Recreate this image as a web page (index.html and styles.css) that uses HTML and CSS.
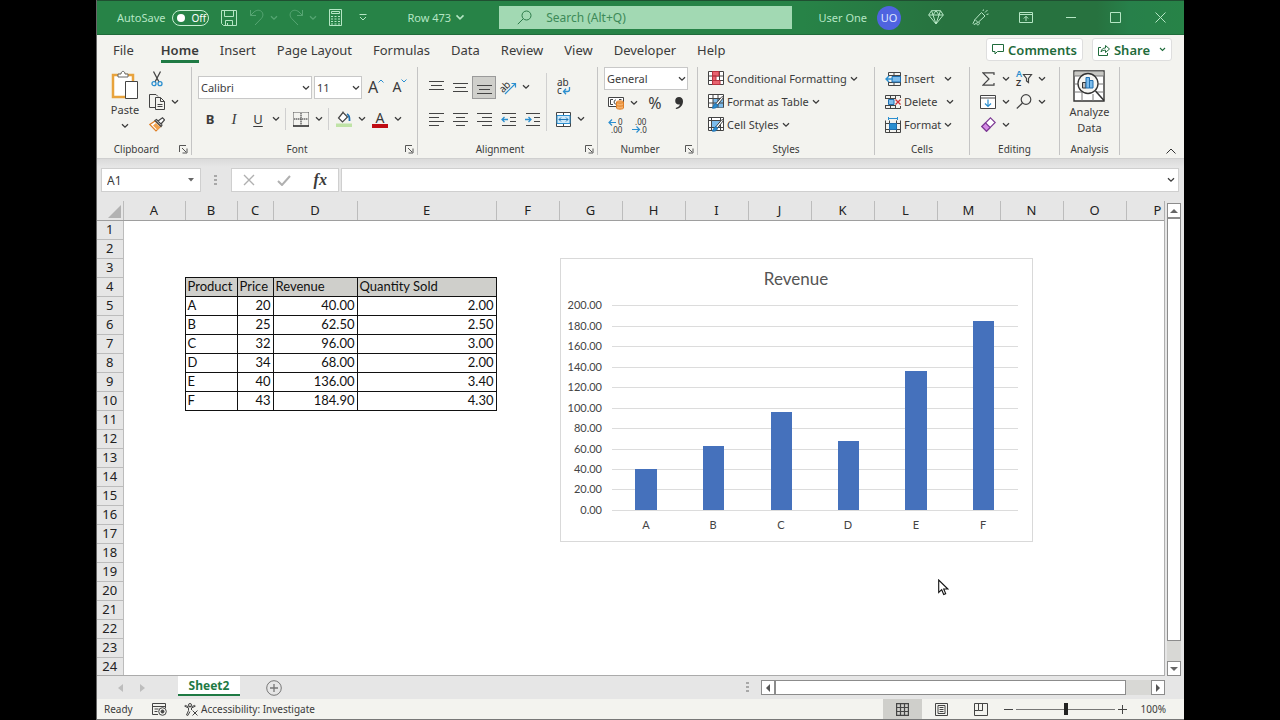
FILE: index.html
```html
<!DOCTYPE html>
<html lang="en">
<head>
    <meta charset="UTF-8">
    <meta name="viewport" content="width=device-width, initial-scale=1.0">
    <title>Row 473</title>
    <link rel="stylesheet" href="styles.css">
</head>
<body>

<!-- shared shapes -->
<svg class="defs" width="0" height="0" aria-hidden="true">
    <symbol id="chev" viewBox="0 0 8 6"><path d="M1 1.2 4 4.2 7 1.2" fill="none" stroke="currentColor" stroke-width="1.3"/></symbol>
    <symbol id="launch" viewBox="0 0 9 9"><path d="M.5 7V.5H7M3 3l4 4M8 3.500V8H3.500" fill="none" stroke="currentColor"/></symbol>
</svg>

<div class="app">

    <header class="titlebar">
        <label class="autosave">AutoSave
            <span class="switch"><input type="checkbox" role="switch" aria-label="AutoSave"><span>Off</span></span>
        </label>
        <div class="quick">
            <button class="q-btn" aria-label="Save">
                <svg width="16" height="16" viewBox="0 0 16 16" fill="none" stroke="currentColor"><path d="M.5.5h15v15h-13l-2-2zM3.500.5v6h9v-6M4.500 15.500v-5h7v5M6.500 13v2.500"/></svg>
            </button>
            <button class="q-btn faded" aria-label="Undo">
                <svg width="16" height="17" viewBox="0 0 16 17" fill="none" stroke="currentColor"><path d="M1.500 1v5.500H7M1.500 6.500 5 3c3-2.500 6-2 7.500-.5 2 2 1.800 5-.2 7L6 16"/></svg>
            </button>
            <button class="q-chev faded" aria-label="Undo list"><svg width="8" height="6"><use href="#chev"/></svg></button>
            <button class="q-btn faded" aria-label="Redo">
                <svg width="16" height="17" viewBox="0 0 16 17" fill="none" stroke="currentColor"><path d="M14.500 1v5.500H9M14.500 6.500 11 3C8 .5 5 1 3.500 2.500c-2 2-1.800 5 .2 7L10 16"/></svg>
            </button>
            <button class="q-chev faded" aria-label="Redo list"><svg width="8" height="6"><use href="#chev"/></svg></button>
            <button class="q-btn" aria-label="Calculator">
                <svg width="13" height="17" viewBox="0 0 13 17" fill="none" stroke="currentColor"><path d="M.5.5h12v16H.5zM2.500 2.500h8v2h-8z"/><path d="M2 7.500h9M2 10h9M2 12.500h9M2 15h9" stroke-dasharray="2 1.500"/></svg>
            </button>
            <button class="q-btn" aria-label="Customize">
                <svg width="8" height="7" viewBox="0 0 8 7" fill="none" stroke="currentColor"><path d="M.5.5h7M1 3l3 3 3-3"/></svg>
            </button>
        </div>
        <button class="doc-name">Row 473 <svg width="10" height="7"><use href="#chev"/></svg></button>
        <label class="search">
            <svg width="15" height="15" viewBox="0 0 15 15" fill="none" stroke="currentColor"><circle cx="9.500" cy="5.500" r="4.500"/><path d="M6.200 8.800.8 14.200"/></svg>
            <input type="text" placeholder="Search (Alt+Q)" aria-label="Search">
        </label>
        <div class="account">
            <span>User One</span>
            <span class="avatar">UO</span>
        </div>
        <div class="window-btns">
            <button aria-label="Premium">
                <svg width="16" height="15" viewBox="0 0 16 15" fill="none" stroke="currentColor"><path d="M3.500.7h9L15.300 5 8 14 .7 5zM.7 5h14.600M5 5l3 9 3-9M3.500.7 5 5l3-4.300L11 5l1.500-4.300"/></svg>
            </button>
            <button aria-label="Draw">
                <svg width="17" height="17" viewBox="0 0 17 17" fill="none" stroke="currentColor"><path d="M9.500 3.500 13 7 6 13.500 2 15.500l-1-1 2-4zM3 10.500 6 13.500M4.500 15c1 1.500 3 1 3-1.500M11 2l.5-1.500M13 3.500 15.500 1M14.500 5.500l2-.5"/></svg>
            </button>
            <button aria-label="Ribbon display options">
                <svg width="14" height="11" viewBox="0 0 14 11" fill="none" stroke="currentColor"><path d="M.5.5h13v10H.5zM.5 2.500h13M7 9V4.500M4.800 6.500 7 4.300l2.200 2.200"/></svg>
            </button>
            <button aria-label="Minimize"><svg width="10" height="10" viewBox="0 0 10 10" stroke="currentColor"><path d="M0 4.500h10"/></svg></button>
            <button aria-label="Maximize"><svg width="11" height="11" viewBox="0 0 11 11" fill="none" stroke="currentColor"><path d="M.5.5h10v10H.5z"/></svg></button>
            <button aria-label="Close"><svg width="11" height="11" viewBox="0 0 11 11" stroke="currentColor"><path d="M.5.5l10 10M10.500.5l-10 10"/></svg></button>
        </div>
    </header>

    <nav class="tabs">
        <a class="tab file" href="#">File</a>
        <a class="tab active" href="#">Home</a>
        <a class="tab" href="#">Insert</a>
        <a class="tab" href="#">Page Layout</a>
        <a class="tab" href="#">Formulas</a>
        <a class="tab" href="#">Data</a>
        <a class="tab" href="#">Review</a>
        <a class="tab" href="#">View</a>
        <a class="tab" href="#">Developer</a>
        <a class="tab" href="#">Help</a>
        <div class="tab-actions">
            <button class="pill">
                <svg width="12" height="11" viewBox="0 0 12 11" fill="none" stroke="currentColor"><path d="M.5.5h11v7h-6l-2.500 2.500V7.500H.5z"/></svg>
                Comments
            </button>
            <button class="pill">
                <svg width="12" height="12" viewBox="0 0 12 12" fill="none" stroke="currentColor"><path d="M3 3.500H.5v8h9V9M3 8c.5-3 2-4 4.500-4V1.500l4 3.500-4 3.500V6.200C5.500 6.200 4 6.500 3 8z"/></svg>
                Share
                <svg class="pill-chev" width="7" height="5"><use href="#chev"/></svg>
            </button>
        </div>
    </nav>

    <section class="ribbon">
        <div class="group clipboard">
            <div class="group-body">
                <button class="big-btn">
                    <svg width="28" height="30" viewBox="0 0 28 30" fill="none"><path d="M2 5h20v22H2z" fill="#fff" stroke="#e8a33d" stroke-width="2.500"/><path d="M7 7V4h3c0-3.500 4-3.500 4 0h3v3z" fill="#fff" stroke="#666"/><path d="M14.500 11.500h12v17h-12z" fill="#fff" stroke="#444"/></svg>
                    <span>Paste</span>
                    <svg width="8" height="6"><use href="#chev"/></svg>
                </button>
                <div class="stack">
                    <button class="tool" aria-label="Cut">
                        <svg width="12" height="16" viewBox="0 0 12 16" fill="none" stroke="#444"><path d="M2.500.5 8 11M9.500.5 4 11" stroke-width="1.300"/><circle cx="3" cy="12.700" r="2" stroke="#2b8fd0" stroke-width="1.300"/><circle cx="9" cy="12.700" r="2" stroke="#2b8fd0" stroke-width="1.300"/></svg>
                    </button>
                    <div class="row">
                        <button class="tool" aria-label="Copy">
                            <svg width="16" height="16" viewBox="0 0 16 16" fill="none" stroke="#444"><path d="M6 13.500H.5V.5H7l2 2"/><path d="M6.500 3.500h5l4 4v8h-9zM11.500 3.500v4h4M8.500 10.500h5M8.500 12.500h5" fill="#f3f3ef"/></svg>
                        </button>
                        <button class="drop" aria-label="Copy options"><svg width="8" height="6"><use href="#chev"/></svg></button>
                    </div>
                    <button class="tool" aria-label="Format Painter">
                        <svg width="16" height="15" viewBox="0 0 16 15" fill="none"><path d="M6 4 .8 7.500 7 14l5-5z" fill="#fff" stroke="#e07f26" stroke-width="1.200"/><path d="M4 8.500l4.500 4.500 2.500-3-4-4z" fill="#f2a24e"/><path d="M6 3.500l1.500-1 5.500 5.500-1 1.500zM9 4l4.500-3.200 2 2L12 7" fill="#fff" stroke="#444" stroke-width="1.200"/></svg>
                    </button>
                </div>
            </div>
            <div class="group-foot"><span>Clipboard</span><button class="launcher" aria-label="Clipboard options"><svg width="9" height="9"><use href="#launch"/></svg></button></div>
        </div>

        <div class="group font">
            <div class="group-body two-rows">
                <div class="row">
                    <span class="combo font-name"><select aria-label="Font"><option>Calibri</option></select><svg width="8" height="6"><use href="#chev"/></svg></span>
                    <span class="combo font-size"><select aria-label="Font size"><option>11</option></select><svg width="8" height="6"><use href="#chev"/></svg></span>
                    <button class="tool grow" aria-label="Increase font size">A<svg width="6" height="4" viewBox="0 0 6 4"><path d="M.5 3.500 3 1l2.500 2.500" fill="none" stroke="#2b8fd0"/></svg></button>
                    <button class="tool shrink" aria-label="Decrease font size">A<svg width="6" height="4" viewBox="0 0 6 4"><path d="M.5.5 3 3 5.500.5" fill="none" stroke="#2b8fd0"/></svg></button>
                </div>
                <div class="row">
                    <button class="tool bold">B</button>
                    <button class="tool italic">I</button>
                    <button class="tool underline">U</button>
                    <button class="drop" aria-label="Underline options"><svg width="8" height="6"><use href="#chev"/></svg></button>
                    <span class="sep"></span>
                    <button class="tool" aria-label="Borders">
                        <svg width="16" height="15" viewBox="0 0 16 15" fill="none" stroke="#555"><path d="M.5.5h15M.5.5v13M15.500.5v13M8 1v12M1 7h14" stroke-dasharray="1 1"/><path d="M8 1v12M1 7h14" stroke-opacity=".6"/><path d="M0 14h16" stroke="#222" stroke-width="1.500"/></svg>
                    </button>
                    <button class="drop" aria-label="Border options"><svg width="8" height="6"><use href="#chev"/></svg></button>
                    <span class="sep"></span>
                    <button class="tool" aria-label="Fill color">
                        <svg width="16" height="16" viewBox="0 0 16 16" fill="none"><path d="M7 1.500 2.500 7l4 4L11.500 6 7 1.500V.5" fill="#fff" stroke="#444" stroke-width="1.200"/><path d="M11 3c2 1 2.800 3 2.500 7" stroke="#1f6fb0" stroke-width="1.800"/><path d="M0 12.500h16V16H0z" fill="#bfe3a6"/></svg>
                    </button>
                    <button class="drop" aria-label="Fill colors"><svg width="8" height="6"><use href="#chev"/></svg></button>
                    <button class="tool font-color" aria-label="Font color">A</button>
                    <button class="drop" aria-label="Font colors"><svg width="8" height="6"><use href="#chev"/></svg></button>
                </div>
            </div>
            <div class="group-foot"><span>Font</span><button class="launcher" aria-label="Font options"><svg width="9" height="9"><use href="#launch"/></svg></button></div>
        </div>

        <div class="group alignment">
            <div class="group-body">
                <div class="two-rows">
                    <div class="row">
                        <button class="tool" aria-label="Top align"><svg width="15" height="15" viewBox="0 0 15 15" stroke="#444"><path d="M0 1.500h15M2 5.500h11M0 9.500h15"/></svg></button>
                        <button class="tool" aria-label="Middle align"><svg width="15" height="15" viewBox="0 0 15 15" stroke="#444"><path d="M0 3.500h15M2 7.500h11M0 11.500h15"/></svg></button>
                        <button class="tool pressed" aria-label="Bottom align"><svg width="15" height="15" viewBox="0 0 15 15" stroke="#444"><path d="M0 5.500h15M2 9.500h11M0 13.500h15"/></svg></button>
                        <button class="tool" aria-label="Orientation">
                            <svg class="spill" width="17" height="16" viewBox="0 0 17 16"><text x="-1" y="11" transform="rotate(-45 5 8)" class="ico-text">ab</text><path d="M5 15 15.500 4.500M11.500 4.500h4v4" fill="none" stroke="#2b8fd0" stroke-width="1.200"/></svg>
                        </button>
                        <button class="drop" aria-label="Orientation options"><svg width="8" height="6"><use href="#chev"/></svg></button>
                    </div>
                    <div class="row">
                        <button class="tool" aria-label="Align left"><svg width="15" height="15" viewBox="0 0 15 15" stroke="#444"><path d="M0 1.500h15M0 5.500h10M0 9.500h15M0 13.500h10"/></svg></button>
                        <button class="tool" aria-label="Center"><svg width="15" height="15" viewBox="0 0 15 15" stroke="#444"><path d="M0 1.500h15M3 5.500h9M0 9.500h15M3 13.500h9"/></svg></button>
                        <button class="tool" aria-label="Align right"><svg width="15" height="15" viewBox="0 0 15 15" stroke="#444"><path d="M0 1.500h15M5 5.500h10M0 9.500h15M5 13.500h10"/></svg></button>
                        <button class="tool" aria-label="Decrease indent"><svg width="15" height="15" viewBox="0 0 15 15" fill="none" stroke="#444"><path d="M1 1.500h14M9 5.500h6M9 9.500h6M1 13.500h14"/><path d="M7 7.500H1M3.500 5 1 7.500 3.500 10" stroke="#2b8fd0" stroke-width="1.300"/></svg></button>
                        <button class="tool" aria-label="Increase indent"><svg width="15" height="15" viewBox="0 0 15 15" fill="none" stroke="#444"><path d="M1 1.500h14M9 5.500h6M9 9.500h6M1 13.500h14"/><path d="M0 7.500h6M3.500 5 6 7.500 3.500 10" stroke="#2b8fd0" stroke-width="1.300"/></svg></button>
                    </div>
                </div>
                <span class="sep tall"></span>
                <div class="two-rows">
                    <div class="row">
                        <button class="tool" aria-label="Wrap text">
                            <svg class="spill" width="15" height="17" viewBox="0 0 15 17"><text x="1" y="7" class="ico-text">ab</text><text x="1" y="15" class="ico-text">c</text><path d="M13.500 8v2.500q0 2-2 2H7.500M10 9.800l-2.500 2.700L10 15.200" fill="none" stroke="#2b8fd0" stroke-width="1.300"/></svg>
                        </button>
                    </div>
                    <div class="row">
                        <button class="tool" aria-label="Merge and center">
                            <svg width="15" height="15" viewBox="0 0 15 15" fill="none" stroke="#444"><path d="M.5.5h14v14H.5z" fill="#fff"/><path d="M1 3.500h13v8H1z" fill="#cfe8f8" stroke="#2b8fd0"/><path d="M7.500 1v2M7.500 12v2"/><path d="M3 7.500h9M5 5.500l-2 2 2 2M10 5.500l2 2-2 2" stroke="#1f78b8"/></svg>
                        </button>
                        <button class="drop" aria-label="Merge options"><svg width="8" height="6"><use href="#chev"/></svg></button>
                    </div>
                </div>
            </div>
            <div class="group-foot"><span>Alignment</span><button class="launcher" aria-label="Alignment options"><svg width="9" height="9"><use href="#launch"/></svg></button></div>
        </div>

        <div class="group number">
            <div class="group-body stack">
                <span class="combo"><select aria-label="Number format"><option>General</option></select><svg width="8" height="6"><use href="#chev"/></svg></span>
                <div class="row">
                    <button class="tool" aria-label="Accounting format">
                        <svg width="17" height="14" viewBox="0 0 17 14" fill="none" stroke="#444"><path d="M.5 1.500h15v9H.5z" fill="#fff"/><path d="M5 3.500H2.500v5H5M8 4c-2.500-.5-2.500 4.500 0 4M11 3.500h2.500"/><path d="M8.500 6c0-1.500 7-1.500 7 0v6c0 1.500-7 1.500-7 0z" fill="#f6b26b" stroke="#e07f26"/><path d="M8.500 6c0 1.500 7 1.500 7 0M8.500 9c0 1.500 7 1.500 7 0" stroke="#e07f26"/></svg>
                    </button>
                    <button class="drop" aria-label="Currencies"><svg width="8" height="6"><use href="#chev"/></svg></button>
                    <button class="tool percent">%</button>
                    <button class="tool" aria-label="Comma style">
                        <svg width="8" height="12" viewBox="0 0 8 12"><path d="M4 0c2.500 0 4 1.800 4 4.300C8 8.500 5 11.500 1 12l-.3-1C3.300 10.200 4.700 9 4.800 7.300 2.500 8.200.2 6.500.2 4 .2 1.600 1.800 0 4 0z" fill="#333"/></svg>
                    </button>
                </div>
                <div class="row">
                    <button class="tool" aria-label="Increase decimal">
                        <svg class="spill" width="16" height="16" viewBox="0 0 16 16"><text x="10" y="7" class="ico-num">0</text><text x="3" y="15" class="ico-num">.00</text><path d="M8 4.500H1M4 1.500l-3 3 3 3" fill="none" stroke="#2b8fd0" stroke-width="1.200"/></svg>
                    </button>
                    <button class="tool" aria-label="Decrease decimal">
                        <svg class="spill" width="16" height="16" viewBox="0 0 16 16"><text x="3" y="7" class="ico-num">.00</text><text x="8" y="15" class="ico-num">.0</text><path d="M0 11.500h7M4.500 8.500l3 3-3 3" fill="none" stroke="#2b8fd0" stroke-width="1.200"/></svg>
                    </button>
                </div>
            </div>
            <div class="group-foot"><span>Number</span><button class="launcher" aria-label="Number options"><svg width="9" height="9"><use href="#launch"/></svg></button></div>
        </div>

        <div class="group styles">
            <div class="group-body stack">
                <button class="text-btn">
                    <svg width="16" height="15" viewBox="0 0 16 15" fill="none" stroke="#444"><path d="M.5.5h15v13H.5z" fill="#fff"/><path d="M.5 5h15M.5 9.500h15M4.500.5v13M11.500.5v13"/><path d="M4.500.5H11V5H4.500zM4.500 5H8v4.500H4.500zM4.500 9.500H12v4H4.500z" fill="#e8636f" stroke="#b8323f"/></svg>
                    Conditional Formatting
                    <svg width="8" height="6"><use href="#chev"/></svg>
                </button>
                <button class="text-btn">
                    <svg width="16" height="15" viewBox="0 0 16 15" fill="none" stroke="#444"><path d="M.5.5h15v13H.5z" fill="#fff"/><path d="M5 5h10v8.500H5z" fill="#7cbcec" stroke="none"/><path d="M.5 4.500h15M.5 9h15M5 .5v13M10 .5v13"/><path d="M15.500 3.500 9.500 11 8 9.500 14 2.500z" fill="#fff"/><path d="M8 9.500 9.500 11c-.5 3-3 3.500-5.500 3 1.500-1 1.500-3.500 4-4.500z" fill="#2b8fd0" stroke="#1f6fb0"/></svg>
                    Format as Table
                    <svg width="8" height="6"><use href="#chev"/></svg>
                </button>
                <button class="text-btn">
                    <svg width="16" height="15" viewBox="0 0 16 15" fill="none" stroke="#444"><path d="M.5.5h15v13H.5z" fill="#fff"/><path d="M3.500 3.500h9v7h-9z" fill="#7cbcec" stroke="none"/><path d="M.5 3.500h15M3.500.5v13M12.500.5v13M.5 10.500h15"/><path d="M15.500 3.500 9.500 11 8 9.500 14 2.500z" fill="#fff"/><path d="M8 9.500 9.500 11c-.5 3-3 3.500-5.500 3 1.500-1 1.500-3.500 4-4.500z" fill="#2b8fd0" stroke="#1f6fb0"/></svg>
                    Cell Styles
                    <svg width="8" height="6"><use href="#chev"/></svg>
                </button>
            </div>
            <div class="group-foot"><span>Styles</span></div>
        </div>

        <div class="group cells">
            <div class="group-body stack">
                <button class="text-btn wide">
                    <svg width="16" height="14" viewBox="0 0 16 14" fill="none" stroke="#444"><path d="M3.500 4V.5h12v13h-12V10M3.500 3.500h12M3.500 10.500h12M9 .5v13"/><path d="M7 4.500h8.500V10H7z" fill="#7cbcec" stroke="#1f6fb0"/><path d="M8 7H1M4 4 1 7l3 3" stroke="#2b8fd0" stroke-width="1.400"/></svg>
                    Insert
                    <svg width="8" height="6"><use href="#chev"/></svg>
                </button>
                <button class="text-btn wide">
                    <svg width="16" height="14" viewBox="0 0 16 14" fill="none" stroke="#444"><path d="M.5 3V.5h15V3M.5 11v2.500h15V11M5.500.5V4M10.500.5V4M5.500 10v3.500M10.500 10v3.500M0 3.500h10M0 10.500h10"/><path d="M3.500 4.500H9V9.500H3.500z" fill="#7cbcec" stroke="#1f6fb0"/><path d="M10.500 4.500l5 5M15.500 4.500l-5 5" stroke="#d13438" stroke-width="1.300"/></svg>
                    Delete
                    <svg width="8" height="6"><use href="#chev"/></svg>
                </button>
                <button class="text-btn">
                    <svg width="16" height="16" viewBox="0 0 16 16" fill="none" stroke="#444"><path d="M.5 3.500v12h15v-12M.5 6.500h15M.5 12.500h15M4.500 3.500v12M11.500 3.500v12"/><path d="M4.500 6.500h7v6h-7z" fill="#2b8fd0" stroke="#1f6fb0"/><path d="M3.500 1.500h9M3.500 0v3M12.500 0v3" stroke="#2b8fd0"/></svg>
                    Format
                    <svg width="8" height="6"><use href="#chev"/></svg>
                </button>
            </div>
            <div class="group-foot"><span>Cells</span></div>
        </div>

        <div class="group editing">
            <div class="group-body stack">
                <div class="row">
                    <button class="tool" aria-label="AutoSum"><svg width="13" height="14" viewBox="0 0 13 14" fill="none" stroke="#444" stroke-width="1.200"><path d="M12 3V.8H1L7 7l-6 6.200h11V11"/></svg></button>
                    <button class="drop" aria-label="AutoSum options"><svg width="8" height="6"><use href="#chev"/></svg></button>
                    <button class="tool" aria-label="Sort and filter">
                        <svg class="spill" width="17" height="17" viewBox="0 0 17 17"><text x="0" y="7" class="ico-az a">A</text><text x="0" y="16" class="ico-az">Z</text><path d="M7.500 4.500h8L12.500 8.500v4l-2-1.500V8.500z" fill="none" stroke="#444" stroke-width="1.200"/></svg>
                    </button>
                    <button class="drop" aria-label="Sort options"><svg width="8" height="6"><use href="#chev"/></svg></button>
                </div>
                <div class="row">
                    <button class="tool" aria-label="Fill"><svg width="16" height="14" viewBox="0 0 16 14" fill="none" stroke="#444"><path d="M.5.5h15v13H.5z" fill="#fff"/><path d="M.5 3h15"/><path d="M8 4.500v7M5 8.500l3 3 3-3" stroke="#2b8fd0" stroke-width="1.200"/></svg></button>
                    <button class="drop" aria-label="Fill options"><svg width="8" height="6"><use href="#chev"/></svg></button>
                    <button class="tool" aria-label="Find and select"><svg width="16" height="15" viewBox="0 0 16 15" fill="none" stroke="#444" stroke-width="1.200"><circle cx="10" cy="5.500" r="4.800"/><path d="M6.500 9 .8 14.500"/></svg></button>
                    <button class="drop" aria-label="Find options"><svg width="8" height="6"><use href="#chev"/></svg></button>
                </div>
                <div class="row">
                    <button class="tool" aria-label="Clear"><svg width="15" height="15" viewBox="0 0 15 15" fill="none" stroke="#7d3a94" stroke-width="1.200"><path d="M9.500.8 14.200 5.500 5.500 14.200.8 9.500z" fill="#fff"/><path d="M4.500 5.800.8 9.500l4.700 4.700 3.700-3.700z" fill="#d58be6"/></svg></button>
                    <button class="drop" aria-label="Clear options"><svg width="8" height="6"><use href="#chev"/></svg></button>
                </div>
            </div>
            <div class="group-foot"><span>Editing</span></div>
        </div>

        <div class="group analysis">
            <div class="group-body">
                <button class="big-btn">
                    <svg width="32" height="32" viewBox="0 0 32 32" fill="none" stroke="#333"><path d="M1 1h30v30H1z" fill="#fff" stroke-width="1.400"/><path d="M1.500 1.500h29v4.500h-29z" fill="#c8c8c4" stroke="none"/><path d="M1 6h30M1 14h6M25 14h6M1 22h8M23 22h8M9 22v9M20 24v7" stroke="#777"/><circle cx="15" cy="13.500" r="10" fill="#f6f6f3" stroke-width="1.300"/><path d="M22.500 21 31 30.500" stroke-width="1.500"/><path d="M9.500 12.500h3.500V18H9.500z" fill="#bbb"/><path d="M13 7.500h3.500V18H13z" fill="#7cbcec" stroke="#1f6fb0"/><path d="M16.500 10.500H20V18h-3.500z" fill="#7cbcec" stroke="#1f6fb0"/></svg>
                    <span>Analyze<br>Data</span>
                </button>
            </div>
            <div class="group-foot"><span>Analysis</span></div>
        </div>

        <button class="collapse" aria-label="Collapse ribbon"><svg width="10" height="6" viewBox="0 0 10 6"><path d="M.5 5.500 5 1l4.500 4.500" fill="none" stroke="#333"/></svg></button>
    </section>

    <div class="formula-bar">
        <div class="name-box">
            <input type="text" value="A1" aria-label="Name box">
            <svg width="6" height="4" viewBox="0 0 6 4"><path d="M0 0h6L3 3.500z" fill="#666"/></svg>
        </div>
        <span class="dots"></span>
        <div class="fx-box">
            <button aria-label="Cancel"><svg width="12" height="12" viewBox="0 0 12 12" stroke="#b0b0b0" stroke-width="1.400"><path d="M1 1l10 10M11 1 1 11"/></svg></button>
            <button aria-label="Enter"><svg width="14" height="11" viewBox="0 0 14 11" fill="none" stroke="#b0b0b0" stroke-width="2"><path d="M1 6l4 4 8-9"/></svg></button>
            <button class="fx">fx</button>
        </div>
        <div class="formula-input">
            <input type="text" aria-label="Formula">
            <svg width="8" height="6"><use href="#chev"/></svg>
        </div>
    </div>

    <div class="workspace">
        <div class="sheet">
            <table class="grid">
                <colgroup><col class="c-head"><col class="c-a"><col class="c-b"><col class="c-c"><col class="c-d"><col class="c-e"><col span="11" class="c-std"></colgroup>
                <thead>
                    <tr><th class="corner" aria-label="Select all"><svg width="13" height="13" viewBox="0 0 13 13"><path d="M13 0v13H0z" fill="#b2b2b2"/></svg></th><th>A</th><th>B</th><th>C</th><th>D</th><th>E</th><th>F</th><th>G</th><th>H</th><th>I</th><th>J</th><th>K</th><th>L</th><th>M</th><th>N</th><th>O</th><th>P</th></tr>
                </thead>
                <tbody>
                    <tr><th>1</th><td colspan="16"></td></tr>
                    <tr><th>2</th><td colspan="16"></td></tr>
                    <tr><th>3</th><td colspan="16"></td></tr>
                    <tr class="data head"><th>4</th><td></td><td class="cell name">Product</td><td class="cell name">Price</td><td class="cell name">Revenue</td><td class="cell name">Quantity Sold</td><td colspan="11"></td></tr>
                    <tr class="data"><th>5</th><td></td><td class="cell name">A</td><td class="cell">20</td><td class="cell">40.00</td><td class="cell">2.00</td><td colspan="11"></td></tr>
                    <tr class="data"><th>6</th><td></td><td class="cell name">B</td><td class="cell">25</td><td class="cell">62.50</td><td class="cell">2.50</td><td colspan="11"></td></tr>
                    <tr class="data"><th>7</th><td></td><td class="cell name">C</td><td class="cell">32</td><td class="cell">96.00</td><td class="cell">3.00</td><td colspan="11"></td></tr>
                    <tr class="data"><th>8</th><td></td><td class="cell name">D</td><td class="cell">34</td><td class="cell">68.00</td><td class="cell">2.00</td><td colspan="11"></td></tr>
                    <tr class="data"><th>9</th><td></td><td class="cell name">E</td><td class="cell">40</td><td class="cell">136.00</td><td class="cell">3.40</td><td colspan="11"></td></tr>
                    <tr class="data"><th>10</th><td></td><td class="cell name">F</td><td class="cell">43</td><td class="cell">184.90</td><td class="cell">4.30</td><td colspan="11"></td></tr>
                    <tr><th>11</th><td colspan="16"></td></tr>
                    <tr><th>12</th><td colspan="16"></td></tr>
                    <tr><th>13</th><td colspan="16"></td></tr>
                    <tr><th>14</th><td colspan="16"></td></tr>
                    <tr><th>15</th><td colspan="16"></td></tr>
                    <tr><th>16</th><td colspan="16"></td></tr>
                    <tr><th>17</th><td colspan="16"></td></tr>
                    <tr><th>18</th><td colspan="16"></td></tr>
                    <tr><th>19</th><td colspan="16"></td></tr>
                    <tr><th>20</th><td colspan="16"></td></tr>
                    <tr><th>21</th><td colspan="16"></td></tr>
                    <tr><th>22</th><td colspan="16"></td></tr>
                    <tr><th>23</th><td colspan="16"></td></tr>
                    <tr><th>24</th><td colspan="16"></td></tr>
                </tbody>
            </table>

            <figure class="chart">
                <svg width="471" height="282" viewBox="0 0 471 282">
                    <text class="chart-title" x="235" y="26">Revenue</text>
                    <path class="gridlines" d="M51 46.500h406M51 67.500h406M51 87.500h406M51 108.500h406M51 128.500h406M51 149.500h406M51 169.500h406M51 190.500h406M51 210.500h406M51 230.500h406M51 251.500h406"/>
                    <g class="y-axis">
                        <text x="41" y="50">200.00</text>
                        <text x="41" y="71">180.00</text>
                        <text x="41" y="91">160.00</text>
                        <text x="41" y="112">140.00</text>
                        <text x="41" y="132">120.00</text>
                        <text x="41" y="153">100.00</text>
                        <text x="41" y="173">80.00</text>
                        <text x="41" y="194">60.00</text>
                        <text x="41" y="214">40.00</text>
                        <text x="41" y="234">20.00</text>
                        <text x="41" y="255">0.00</text>
                    </g>
                    <g class="bars">
                        <rect x="74" y="210" width="22" height="41"/>
                        <rect x="142" y="187" width="21" height="64"/>
                        <rect x="210" y="153" width="21" height="98"/>
                        <rect x="277" y="182" width="21" height="69"/>
                        <rect x="344" y="112" width="22" height="139"/>
                        <rect x="412" y="62" width="21" height="189"/>
                    </g>
                    <g class="x-axis">
                        <text x="85" y="270">A</text>
                        <text x="152" y="270">B</text>
                        <text x="220" y="270">C</text>
                        <text x="287" y="270">D</text>
                        <text x="355" y="270">E</text>
                        <text x="422" y="270">F</text>
                    </g>
                </svg>
            </figure>

            <svg class="pointer" width="11" height="17" viewBox="0 0 11 17"><path d="M.7 1v12.500l3-2.800 2 4.800 2-.9-2-4.600h4.200z" fill="#fff" stroke="#111" stroke-width="1.100"/></svg>
        </div>
        <div class="vscroll">
            <button class="sb-btn" aria-label="Scroll up"><svg width="8" height="4" viewBox="0 0 8 4"><path d="M0 4h8L4 0z" fill="#666"/></svg></button>
            <div class="thumb"></div>
            <div class="track"></div>
            <button class="sb-btn" aria-label="Scroll down"><svg width="8" height="4" viewBox="0 0 8 4"><path d="M0 0h8L4 4z" fill="#666"/></svg></button>
        </div>
    </div>

    <div class="sheet-bar">
        <div class="sheet-nav">
            <button aria-label="Previous sheet"><svg width="5" height="8" viewBox="0 0 5 8"><path d="M5 0v8L0 4z" fill="#bdbdbd"/></svg></button>
            <button aria-label="Next sheet"><svg width="5" height="8" viewBox="0 0 5 8"><path d="M0 0v8l5-4z" fill="#bdbdbd"/></svg></button>
        </div>
        <button class="sheet-tab">Sheet2</button>
        <button class="add-sheet" aria-label="New sheet"><svg width="16" height="16" viewBox="0 0 16 16" fill="none" stroke="#777"><circle cx="8" cy="8" r="7.300"/><path d="M8 4v8M4 8h8" stroke-width="1.300"/></svg></button>
        <span class="dots"></span>
        <div class="hscroll">
            <button class="sb-btn" aria-label="Scroll left"><svg width="4" height="8" viewBox="0 0 4 8"><path d="M4 0v8L0 4z" fill="#555"/></svg></button>
            <div class="thumb"></div>
            <div class="track"></div>
            <button class="sb-btn" aria-label="Scroll right"><svg width="4" height="8" viewBox="0 0 4 8"><path d="M0 0v8l4-4z" fill="#555"/></svg></button>
        </div>
    </div>

    <footer class="status">
        <span class="ready">Ready</span>
        <button aria-label="Record macro"><svg width="15" height="13" viewBox="0 0 15 13" fill="none" stroke="#444"><path d="M6 11.500H.5V.5h13V5M.5 3.500h13M2.500 6h4M2.500 8.500h3"/><circle cx="10.500" cy="8.500" r="3.800"/><circle cx="10.500" cy="8.500" r="1.500" fill="#444"/></svg></button>
        <button class="access">
            <svg width="14" height="13" viewBox="0 0 14 13" fill="none" stroke="#444"><circle cx="6" cy="2" r="1.500"/><path d="M.7 3.200 4.500 5v2.500L2.500 12l1.300.5L6 8.500M11.300 3.200 7.500 5v2M.7 3.200c.3-1 1-.8 1.500-.5L4.500 3.800h3l2.300-1.100c.5-.3 1.200-.5 1.500.5M8.500 7.500l5 5M13.500 7.500l-5 5"/></svg>
            Accessibility: Investigate
        </button>
        <div class="views">
            <button class="on" aria-label="Normal"><svg width="13" height="13" viewBox="0 0 13 13" fill="none" stroke="#444" stroke-width="1.200"><path d="M.6.6h11.800v11.800H.6zM4.500.6v11.800M8.500.6v11.800M.6 4.500h11.800M.6 8.500h11.800"/></svg></button>
            <button aria-label="Page layout"><svg width="13" height="13" viewBox="0 0 13 13" fill="none" stroke="#444"><path d="M.5.5h12v12H.5zM3 2.500h7v8H3zM4.500 4.500h4M4.500 6.500h4M4.500 8.500h4"/></svg></button>
            <button aria-label="Page break preview"><svg width="14" height="13" viewBox="0 0 14 13" fill="none" stroke="#444"><path d="M.5.5h13v12H.5zM4.500.5v7h4v-7M.5 7.500h4M8.500 7.500v-3"/></svg></button>
        </div>
        <button class="zoom-btn" aria-label="Zoom out"><svg width="9" height="9" viewBox="0 0 9 9" stroke="#444"><path d="M0 4.500h9"/></svg></button>
        <input class="zoom" type="range" min="0" max="100" value="50" aria-label="Zoom">
        <button class="zoom-btn" aria-label="Zoom in"><svg width="9" height="9" viewBox="0 0 9 9" stroke="#444"><path d="M0 4.500h9M4.500 0v9"/></svg></button>
        <span class="zoom-value">100%</span>
    </footer>
</div>

</body>
</html>
```
FILE: styles.css
```css
* {
    box-sizing: border-box;
}
body {
    margin: 0;
    padding: 0 7.5%;
    height: 100vh;
    overflow: hidden;
    background: #000;
    font-family: "Noto Sans", "Open Sans", sans-serif;
    font-size: 12px;
    color: #3b3b3b;
}
button, input, select {
    font: inherit;
    color: inherit;
    border: none;
    background: none;
    padding: 0;
    margin: 0;
    outline: none;
}
button, a {
    display: flex;
    align-items: center;
    justify-content: center;
    color: inherit;
    text-decoration: none;
    white-space: nowrap;
}
svg {
    display: block;
    flex: none;
}
.spill {
    overflow: visible;
}
.defs {
    position: absolute;
}
.app {
    display: flex;
    flex-direction: column;
    height: 100%;
    background: #e6e6e6;
    border-left: 1px solid #666;
    border-bottom: 1px solid #777;
}

/* title bar */
.titlebar {
    display: flex;
    align-items: center;
    height: 35px;
    flex: none;
    padding: 0 1px 0 20px;
    color: #b5e6c4;
    font-size: 11px;
    border-top: 1px solid #1f4f31;
    border-bottom: 1px solid #1f6b3b;
    background: linear-gradient(90deg, #278347 65%, #27723f 78%, #27723f 92%, #27804a 95%, #278347);
}
.autosave {
    display: flex;
    align-items: center;
    gap: 7px;
}
.switch {
    display: flex;
    align-items: center;
    gap: 6px;
    width: 37px;
    height: 16px;
    padding-left: 4px;
    border: 1px solid #c9efd4;
    border-radius: 8px;
    color: #fff;
    font-size: 10px;
}
.switch input {
    appearance: none;
    width: 8px;
    height: 8px;
    border-radius: 50%;
    background: #fff;
}
.quick {
    display: flex;
    align-items: center;
    margin-left: 10px;
}
.q-btn {
    width: 20px;
    height: 24px;
    margin-right: 8px;
}
.q-chev {
    width: 8px;
    height: 24px;
    margin-right: 4px;
}
.q-btn + .q-chev {
    margin-left: -5px;
}
.q-chev + .q-btn {
    margin-left: 4px;
}
.faded {
    color: #56a573;
}
.doc-name {
    gap: 4px;
    margin-left: 26px;
}
.search {
    display: flex;
    align-items: center;
    gap: 14px;
    flex: 1;
    height: 23px;
    margin: 0 26px 0 34px;
    padding-left: 18px;
    background: #a2d9b3;
    color: #2c7a49;
    font-size: 12px;
}
.search input {
    flex: 1;
}
.search input::placeholder {
    color: #3d8a58;
    opacity: 1;
}
.account {
    display: flex;
    align-items: center;
    gap: 10px;
}
.avatar {
    display: flex;
    align-items: center;
    justify-content: center;
    width: 24px;
    height: 24px;
    border-radius: 50%;
    background: #4f63e0;
    color: #dfe6ff;
}
.window-btns {
    display: flex;
    margin-left: 12px;
}
.window-btns button {
    width: 45px;
    height: 33px;
}

/* ribbon tabs */
.tabs {
    display: flex;
    align-items: center;
    gap: 21px;
    height: 29px;
    flex: none;
    padding: 0 12px 0 16px;
    background: #f3f3ef;
    font-size: 13px;
}
.tab {
    height: 27px;
    border-bottom: 3px solid transparent;
    border-top: 3px solid transparent;
}
.tab.file {
    margin-right: 6px;
}
.tab.active {
    font-weight: 600;
    border-bottom-color: #1f7a44;
}
.tab-actions {
    display: flex;
    gap: 9px;
    margin-left: auto;
}
.pill {
    gap: 4px;
    height: 23px;
    padding: 0 5px;
    background: #fff;
    border: 1px solid #dedede;
    border-radius: 3px;
    color: #1f6b3b;
    font-weight: 600;
}
.pill-chev {
    margin-left: 5px;
}

/* ribbon */
.ribbon {
    display: flex;
    height: 95px;
    flex: none;
    padding-top: 3px;
    background: #f3f3ef;
    border-bottom: 1px solid #cfcfcf;
    font-size: 11px;
}
.group {
    display: flex;
    flex-direction: column;
    flex: none;
    margin-bottom: 3px;
    border-right: 1px solid #c4c4c4;
}
.clipboard { width: 95px; }
.font { width: 226px; }
.alignment { width: 180px; }
.number { width: 100px; }
.styles { width: 177px; }
.cells { width: 95px; }
.editing { width: 90px; }
.analysis { width: 60px; }
.group-body {
    display: flex;
    flex: 1;
    padding-left: 6px;
}
.clipboard .group-body {
    padding-left: 11px;
}
.styles .group-body, .cells .group-body {
    padding-left: 10px;
}
.analysis .group-body {
    padding-left: 0;
    justify-content: center;
}
.group-foot {
    display: flex;
    align-items: center;
    height: 12px;
    font-size: 10px;
}
.group-foot span {
    flex: 1;
    text-align: center;
}
.launcher {
    width: 15px;
    height: 12px;
    color: #555;
}
.row {
    display: flex;
    align-items: center;
}
.stack {
    display: flex;
    flex-direction: column;
}
.stack > * {
    height: 23px;
    flex: none;
}
.two-rows {
    display: flex;
    flex-direction: column;
    gap: 8px;
    padding-top: 8px;
}
.two-rows .row {
    height: 24px;
}
.tool {
    width: 24px;
    height: 23px;
}
.drop {
    width: 12px;
    height: 23px;
}
.big-btn {
    flex-direction: column;
    justify-content: flex-start;
    gap: 2px;
    padding-top: 3px;
    line-height: 16px;
    text-align: center;
}
.clipboard .big-btn {
    width: 34px;
}
.clipboard .big-btn span {
    margin-bottom: 3px;
}
.clipboard .stack {
    align-items: flex-start;
    margin-left: 3px;
}
.combo {
    position: relative;
    display: flex;
    height: 23px;
    background: #fff;
    border: 1px solid #c8c8c8;
}
.combo select {
    appearance: none;
    width: 100%;
    padding-left: 2px;
}
.combo svg {
    position: absolute;
    right: 1px;
    top: 8px;
    pointer-events: none;
}
.font-name {
    width: 114px;
    margin-right: 2px;
}
.font-size {
    width: 48px;
    margin-right: 2px;
}
.number .combo {
    width: 84px;
    margin-bottom: 1px;
}
.grow, .shrink {
    align-items: flex-start;
    font-size: 16px;
    line-height: 22px;
}
.shrink {
    font-size: 14px;
}
.grow svg, .shrink svg {
    margin-top: 3px;
}
.bold {
    font-weight: 700;
    font-size: 13px;
}
.italic {
    font-family: "Liberation Serif", serif;
    font-style: italic;
    font-size: 15px;
}
.underline {
    text-decoration: underline;
    text-underline-offset: 2px;
    font-size: 13px;
}
.font-color {
    width: 16px;
    height: 17px;
    margin: 0 4px;
    border-bottom: 4px solid #c00d14;
    font-size: 14px;
}
.sep {
    width: 1px;
    height: 22px;
    margin: 0 3px;
    background: #d0d0d0;
}
.sep.tall {
    height: 58px;
    margin: 6px 4px 0 2px;
}
.pressed {
    background: #cfcfcb;
    border: 1px solid #9a9a9a;
}
.percent {
    font-size: 16px;
    margin-left: 3px;
}
.ico-text {
    font-size: 10px;
    fill: #333;
}
.ico-num {
    font-size: 8px;
    fill: #333;
}
.ico-az {
    font-size: 9px;
    font-weight: 600;
    fill: #333;
}
.ico-az.a {
    fill: #2b8fd0;
}
.text-btn {
    justify-content: flex-start;
    gap: 3px;
}
.text-btn.wide svg:last-child {
    margin-left: 6px;
}
.collapse {
    align-self: flex-end;
    width: 16px;
    height: 14px;
    margin: 0 5px 0 auto;
}

/* formula bar */
.formula-bar {
    display: flex;
    align-items: center;
    height: 42px;
    flex: none;
    padding: 0 5px 0 4px;
    background: linear-gradient(#dadada, #e6e6e6 8px);
}
.name-box, .fx-box, .formula-input {
    display: flex;
    align-items: center;
    height: 24px;
    background: #fff;
    border: 1px solid #cfcfcf;
}
.name-box {
    width: 100px;
    padding: 0 6px 0 5px;
}
.name-box input, .formula-input input {
    flex: 1;
    min-width: 0;
}
.dots {
    width: 3px;
    height: 11px;
    background: repeating-linear-gradient(#a8a8a8 0 2px, transparent 2px 4px);
}
.formula-bar .dots {
    margin: 0 14px 0 13px;
}
.fx-box {
    width: 108px;
    justify-content: space-around;
    margin-right: 2px;
}
.fx {
    font-family: "Liberation Serif", serif;
    font-style: italic;
    font-weight: 700;
    font-size: 16px;
}
.formula-input {
    flex: 1;
    padding: 0 3px 0 4px;
}

/* sheet */
.workspace {
    display: flex;
    flex: 1;
    min-height: 0;
}
.sheet {
    position: relative;
    flex: 1;
    min-width: 0;
    overflow: hidden;
    background: #fff;
    border-right: 1px solid #b0b0b0;
    border-bottom: 1px solid #ababab;
}
.grid {
    table-layout: fixed;
    border-collapse: collapse;
    width: 1092px;
}
.c-head { width: 26px; }
.c-a { width: 62px; }
.c-b { width: 52px; }
.c-c { width: 36px; }
.c-d { width: 84px; }
.c-e { width: 139px; }
.c-std { width: 63px; }
.grid tr {
    height: 19px;
}
.grid th {
    padding: 0;
    background: #e6e6e6;
    border: 1px solid #bcbcbc;
    font-size: 13px;
    font-weight: 400;
    line-height: 17px;
    color: #222;
}
.grid thead th {
    border-top: none;
    border-bottom-color: #9e9e9e;
}
.grid tr th:first-child {
    border-left: none;
}
.corner svg {
    margin: 2px 0 0 11px;
}
.grid td {
    padding: 0 2px;
    font-family: Lato, sans-serif;
    font-size: 13px;
    line-height: 17px;
    white-space: nowrap;
    color: #111;
}
.data .cell {
    border: 1px solid #111;
    text-align: right;
}
.data .cell.name {
    text-align: left;
}
.data.head .cell {
    background: #cfcfcb;
}
.chart {
    position: absolute;
    left: 463px;
    top: 57px;
    margin: 0;
    background: #fff;
    border: 1px solid #d9d9d9;
    font-family: Lato, sans-serif;
}
.chart-title {
    font-size: 17px;
    fill: #555;
    text-anchor: middle;
}
.y-axis, .x-axis {
    font-size: 11px;
    fill: #444;
}
.y-axis {
    text-anchor: end;
}
.x-axis {
    text-anchor: middle;
}
.gridlines {
    stroke: #dcdcdc;
}
.bars {
    fill: #4571bc;
}
.pointer {
    position: absolute;
    left: 841px;
    top: 378px;
}
.vscroll {
    display: flex;
    flex-direction: column;
    width: 19px;
    padding: 2px 3px 0 2px;
}
.sb-btn {
    flex: none;
    width: 14px;
    height: 15px;
    background: #fff;
    border: 1px solid #8c8c8c;
}
.thumb {
    background: #fff;
    border: 1px solid #8c8c8c;
}
.track {
    background: #d8d8d5;
}
.vscroll .thumb {
    flex: 21;
}
.vscroll .track {
    flex: 1;
}

/* sheet tabs and horizontal scroll */
.sheet-bar {
    display: flex;
    align-items: center;
    height: 23px;
    flex: none;
    padding-right: 19px;
}
.sheet-nav {
    display: flex;
    gap: 17px;
    width: 81px;
    padding-left: 21px;
}
.sheet-tab {
    align-self: flex-start;
    width: 62px;
    height: 20px;
    background: #fff;
    border-bottom: 2px solid #1f7a44;
    color: #1f7a44;
    font-weight: 700;
}
.add-sheet {
    margin: 0 auto 0 26px;
}
.sheet-bar .dots {
    margin-right: 12px;
}
.hscroll {
    display: flex;
    width: 404px;
}
.hscroll .thumb {
    flex: 14;
}
.hscroll .track {
    flex: 1;
}

/* status bar */
.status {
    display: flex;
    align-items: center;
    height: 20px;
    flex: none;
    padding: 0 18px 0 7px;
    background: #f3f3ef;
    font-size: 10px;
}
.ready {
    width: 48px;
}
.access {
    gap: 3px;
    margin-left: 17px;
}
.views {
    display: flex;
    margin-left: auto;
    margin-right: 4px;
}
.views button {
    width: 39px;
    height: 20px;
}
.views .on {
    background: #cfcfcb;
}
.zoom {
    appearance: none;
    width: 99px;
    height: 12px;
    margin: 0 3px;
    background: linear-gradient(#777, #777) center / 100% 1px no-repeat;
}
.zoom::-webkit-slider-thumb {
    appearance: none;
    width: 4px;
    height: 12px;
    background: #222;
}
.zoom-value {
    width: 39px;
    text-align: right;
}
```
